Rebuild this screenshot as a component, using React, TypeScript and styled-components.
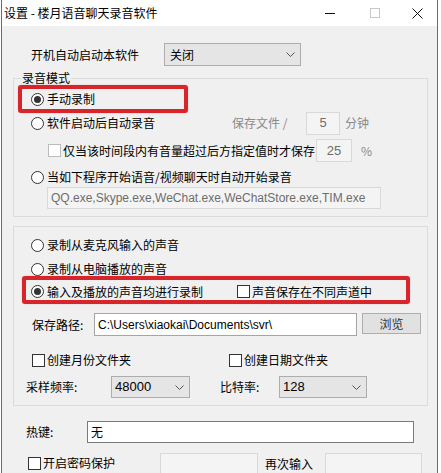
import React from 'react';
import styled, { createGlobalStyle } from 'styled-components';

const Global = createGlobalStyle`
  html, body { margin: 0; padding: 0; background: #ffffff; }
  body {
    font-family: "Noto Sans CJK SC", "Microsoft YaHei", sans-serif;
    font-size: 12px;
    color: #000;
  }
  * { box-sizing: border-box; }
`;

const Window = styled.div`
  margin-left: 1px;
  width: 437px;
  height: 473px;
  border-left: 1px solid #2f7bc4;
  border-right: 1px solid #2f7bc4;
  background: #f0f0f0;
  overflow: hidden;
  display: flex;
  flex-direction: column;
`;

const TitleBar = styled.div`
  height: 26px;
  flex: none;
  background: #ffffff;
  display: flex;
  align-items: center;
  padding-left: 2px;
`;

const Title = styled.div`
  flex: 1;
  line-height: 26px;
  font-size: 12px;
  color: #000;
`;

const Caption = styled.div<{ $w: number }>`
  width: ${(p) => p.$w}px;
  height: 26px;
  display: flex;
  align-items: center;
  justify-content: center;
`;

const Body = styled.div`
  flex: 1;
  padding: 17px 0 0 11px;
  display: flex;
  flex-direction: column;
  align-items: flex-start;
`;

const Row = styled.div<{ $ml?: number; $mt?: number; $h?: number; $align?: string }>`
  display: flex;
  align-items: ${(p) => p.$align || 'center'};
  margin-left: ${(p) => p.$ml || 0}px;
  margin-top: ${(p) => p.$mt || 0}px;
  height: ${(p) => (p.$h ? `${p.$h}px` : 'auto')};
  flex: none;
`;

const Label = styled.span<{ $w?: number; $gray?: boolean }>`
  display: inline-block;
  width: ${(p) => (p.$w ? `${p.$w}px` : 'auto')};
  flex: none;
  line-height: 14px;
  white-space: nowrap;
  color: ${(p) => (p.$gray ? '#8a8a8a' : '#000')};
`;

const Combo = styled.div<{ $w: number; $h?: number; $pl?: number }>`
  width: ${(p) => p.$w}px;
  height: ${(p) => p.$h ?? 22}px;
  background: #e5e5e5;
  border: 1px solid #adadad;
  display: flex;
  align-items: center;
  justify-content: space-between;
  padding: 0 5px 0 ${(p) => p.$pl ?? 3}px;
  line-height: 14px;
  flex: none;
`;

const ComboText = styled.span<{ $latin?: boolean }>`
  white-space: nowrap;
  font-family: ${(p) => (p.$latin ? '"Liberation Sans", Arial, sans-serif' : 'inherit')};
  font-size: ${(p) => (p.$latin ? '13px' : '12px')};
`;

const Group = styled.fieldset<{ $pb: number }>`
  margin: 5px 0 0 0;
  padding: 0 0 ${(p) => p.$pb}px 0;
  width: 415px;
  border: 1px solid #dcdcdc;
  display: flex;
  flex-direction: column;
  align-items: flex-start;
  min-width: 0;
`;

const Legend = styled.legend`
  margin-left: 7px;
  padding: 0 1px;
  font-size: 12px;
  line-height: 14px;
  color: #000;
`;

const Box = styled.div`
  width: 415px;
  margin-top: 9px;
  border: 1px solid #dcdcdc;
  padding-bottom: 7px;
  display: flex;
  flex-direction: column;
  align-items: flex-start;
`;

const RedBox = styled.div<{ $w: number; $ml: number; $pl: number; $pt?: number }>`
  width: ${(p) => p.$w}px;
  height: 28px;
  margin-left: ${(p) => p.$ml}px;
  border: 4px solid #d8252b;
  border-radius: 3px;
  box-shadow: 0 0 1px rgba(200, 30, 30, 0.6);
  display: flex;
  align-items: center;
  padding: ${(p) => p.$pt || 0}px 0 0 ${(p) => p.$pl}px;
  flex: none;
`;

const RadioCircle = styled.span<{ $on?: boolean }>`
  width: 13px;
  height: 13px;
  border-radius: 50%;
  border: 1px solid #333;
  background: #fff;
  display: inline-flex;
  align-items: center;
  justify-content: center;
  margin-right: 3px;
  flex: none;
  &::after {
    content: '';
    display: ${(p) => (p.$on ? 'block' : 'none')};
    width: 7px;
    height: 7px;
    border-radius: 50%;
    background: #333;
  }
`;

const CheckSquare = styled.span<{ $disabled?: boolean }>`
  width: 13px;
  height: 13px;
  border: 1px solid ${(p) => (p.$disabled ? '#bcbcbc' : '#333')};
  background: #fff;
  margin-right: 2px;
  flex: none;
`;

const Choice = styled.span<{ $w?: number; $mt?: number }>`
  display: inline-flex;
  align-items: center;
  width: ${(p) => (p.$w ? `${p.$w}px` : 'auto')};
  margin-top: ${(p) => p.$mt || 0}px;
  flex: none;
`;

const Edit = styled.div<{
  $w: number;
  $h: number;
  $disabled?: boolean;
  $center?: boolean;
  $latin?: boolean;
  $dark?: boolean;
}>`
  width: ${(p) => p.$w}px;
  height: ${(p) => p.$h}px;
  background: ${(p) => (p.$disabled ? '#f4f4f4' : '#fff')};
  border: 1px solid ${(p) => (p.$disabled ? '#d9d9d9' : p.$dark ? '#7a7a7a' : '#a5a5a5')};
  color: ${(p) => (p.$disabled ? '#6d6d6d' : '#000')};
  display: flex;
  align-items: center;
  justify-content: ${(p) => (p.$center ? 'center' : 'flex-start')};
  padding-left: ${(p) => (p.$center ? 0 : 3)}px;
  font-family: ${(p) => (p.$latin ? '"Liberation Sans", Arial, sans-serif' : 'inherit')};
  font-size: ${(p) => (p.$latin && p.$center ? '13px' : '12px')};
  line-height: 14px;
  white-space: nowrap;
  overflow: hidden;
  flex: none;
`;

const Button = styled.div`
  width: 59px;
  height: 21px;
  margin-left: 5px;
  background: #e1e1e1;
  border: 1px solid #adadad;
  display: flex;
  align-items: center;
  justify-content: center;
  color: #333;
  line-height: 14px;
  flex: none;
`;

const Chevron = () => (
  <svg width="9" height="5" viewBox="0 0 9 5">
    <path d="M0.5 0.5 L4.5 4.5 L8.5 0.5" fill="none" stroke="#555" strokeWidth="1" />
  </svg>
);

const Radio = ({ on, children, w }: { on?: boolean; children: React.ReactNode; w?: number }) => (
  <Choice $w={w}>
    <RadioCircle $on={on} />
    <Label>{children}</Label>
  </Choice>
);

const Check = ({
  disabled,
  children,
  w,
  mt,
}: {
  disabled?: boolean;
  children: React.ReactNode;
  w?: number;
  mt?: number;
}) => (
  <Choice $w={w} $mt={mt}>
    <CheckSquare $disabled={disabled} />
    <Label>{children}</Label>
  </Choice>
);

export default function App() {
  return (
    <>
      <Global />
      <Window>
        <TitleBar>
          <Title>设置 - 楼月语音聊天录音软件</Title>
          <Caption $w={45}>
            <svg width="10" height="1" viewBox="0 0 10 1">
              <rect width="10" height="1" fill="#111" />
            </svg>
          </Caption>
          <Caption $w={45}>
            <svg width="10" height="10" viewBox="0 0 10 10">
              <rect x="0.5" y="0.5" width="9" height="9" fill="none" stroke="#c8c8c8" />
            </svg>
          </Caption>
          <Caption $w={40}>
            <svg width="11" height="11" viewBox="0 0 11 11">
              <path d="M0.5 0.5 L10.5 10.5 M10.5 0.5 L0.5 10.5" stroke="#111" strokeWidth="1" />
            </svg>
          </Caption>
        </TitleBar>
        <Body>
          <Row $ml={18} $h={23}>
            <Label $w={133}>开机自动启动本软件</Label>
            <Combo $w={137} $h={23} $pl={5}>
              <ComboText>关闭</ComboText>
              <Chevron />
            </Combo>
          </Row>

          <Group $pb={7}>
            <Legend>录音模式</Legend>
            <RedBox $w={170} $ml={4} $pl={9}>
              <Radio on>手动录制</Radio>
            </RedBox>
            <Row $ml={17} $mt={-2} $h={24}>
              <Radio w={201}>软件启动后自动录音</Radio>
              <Label $w={74} $gray>
                保存文件 /
              </Label>
              <Edit $w={34} $h={23} $disabled $center $latin>
                5
              </Edit>
              <Label $gray style={{ marginLeft: 5 }}>
                分钟
              </Label>
            </Row>
            <Row $ml={34} $mt={4} $h={23}>
              <Check disabled w={268}>
                仅当该时间段内有音量超过后方指定值时才保存
              </Check>
              <Edit $w={36} $h={23} $disabled $center $latin>
                25
              </Edit>
              <Label $gray style={{ marginLeft: 9 }}>
                %
              </Label>
            </Row>
            <Row $ml={17} $mt={5} $h={20}>
              <Radio>当如下程序开始语音/视频聊天时自动开始录音</Radio>
            </Row>
            <Row $ml={33}>
              <Edit $w={334} $h={22} $disabled $latin>
                QQ.exe,Skype.exe,WeChat.exe,WeChatStore.exe,TIM.exe
              </Edit>
            </Row>
          </Group>

          <Box>
            <Row $ml={17} $mt={11} $h={14}>
              <Radio>录制从麦克风输入的声音</Radio>
            </Row>
            <Row $ml={17} $mt={10} $h={14}>
              <Radio>录制从电脑播放的声音</Radio>
            </Row>
            <RedBox $w={388} $ml={8} $pl={5} $pt={3}>
              <Radio on w={206}>
                输入及播放的声音均进行录制
              </Radio>
              <Check>声音保存在不同声道中</Check>
            </RedBox>
            <Row $ml={18} $mt={9} $h={23} $align="flex-start">
              <Label $w={62} style={{ marginTop: 5 }}>
                保存路径:
              </Label>
              <Edit $w={263} $h={23} $latin>
                C:\Users\xiaokai\Documents\svr\
              </Edit>
              <Button>浏览</Button>
            </Row>
            <Row $ml={18} $mt={17} $h={14}>
              <Check w={197}>创建月份文件夹</Check>
              <Check>创建日期文件夹</Check>
            </Row>
            <Row $ml={12} $mt={9} $h={22}>
              <Label $w={85}>采样频率:</Label>
              <Combo $w={79}>
                <ComboText $latin>48000</ComboText>
                <Chevron />
              </Combo>
              <Label $w={59} style={{ marginLeft: 30 }}>
                比特率:
              </Label>
              <Combo $w={88}>
                <ComboText $latin>128</ComboText>
                <Chevron />
              </Combo>
            </Row>
          </Box>

          <Row $ml={13} $mt={15} $h={22}>
            <Label $w={61}>热键:</Label>
            <Edit $w={327} $h={22} $dark>
              无
            </Edit>
          </Row>
          <Row $ml={15} $mt={10} $h={23} $align="flex-start">
            <Check w={132} mt={3}>
              开启密码保护
            </Check>
            <Edit $w={98} $h={23} $disabled />
            <Label $w={67} style={{ paddingLeft: 7, marginTop: 4 }}>
              再次输入
            </Label>
            <Edit $w={97} $h={23} $disabled />
          </Row>
        </Body>
      </Window>
    </>
  );
}
